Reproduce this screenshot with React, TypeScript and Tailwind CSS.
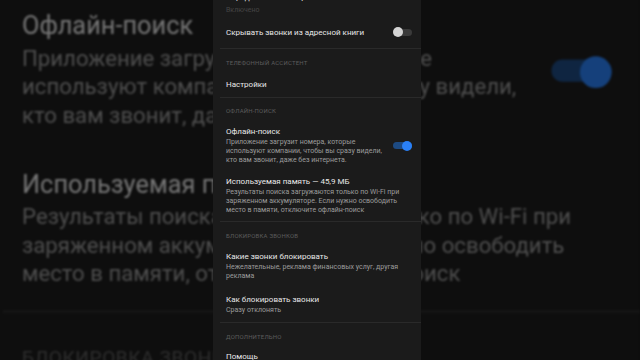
import React from "react";

function Title({ children }: { children: React.ReactNode }) {
  return <div className="text-[8px] leading-[11px] text-[#e8e8e8] whitespace-nowrap">{children}</div>;
}

function Desc({ children }: { children: React.ReactNode }) {
  return <div className="mt-[1px] text-[7px] leading-[9px] text-[#9b9b9b] whitespace-nowrap">{children}</div>;
}

function Label({ children }: { children: React.ReactNode }) {
  return <div className="text-[6px] leading-[8px] uppercase tracking-[0.2px] text-[#5c5c5c] whitespace-nowrap">{children}</div>;
}

function Toggle({ on }: { on: boolean }) {
  return (
    <div className="relative w-[19px] h-[10px] flex items-center shrink-0">
      <div className={on ? "w-full h-[7px] rounded-full bg-[#1d4a82]" : "w-full h-[7px] rounded-full bg-[#3a3a3a]"} />
      <div
        className={
          on
            ? "absolute top-0 right-0 w-[10px] h-[10px] rounded-full bg-[#2a80f6]"
            : "absolute top-0 left-0 w-[10px] h-[10px] rounded-full bg-[#d4d4d4]"
        }
      />
    </div>
  );
}

function Divider() {
  return <div className="ml-[7px] h-px bg-[#2a2a2a]" />;
}

function Screen() {
  return (
    <div className="w-[208px] h-[360px] bg-[#1b1b1b] overflow-hidden font-['Roboto',sans-serif]">
      <div className="h-[16px] overflow-hidden flex flex-col justify-end pl-[13px]">
        <div className="mb-[3px]">
          <Title>Определитель номера</Title>
        </div>
        <div className="mb-[2px] text-[7px] leading-[8px] text-[#454545]">Включено</div>
      </div>

      <div className="h-[32px] flex items-center justify-between pl-[13px] pr-[9px]">
        <Title>Скрывать звонки из адресной книги</Title>
        <Toggle on={false} />
      </div>

      <Divider />
      <div className="pl-[13px] pt-[10px] pb-[7px]">
        <Label>Телефонный ассистент</Label>
        <div className="mt-[12px]">
          <Title>Настройки</Title>
        </div>
      </div>

      <Divider />
      <div className="pl-[13px] pr-[9px] pt-[9px] pb-[6px]">
        <Label>Офлайн-поиск</Label>
        <div className="mt-[11px] flex items-center justify-between">
          <div>
            <Title>Офлайн-поиск</Title>
            <Desc>
              Приложение загрузит номера, которые
              <br />
              используют компании, чтобы вы сразу видели,
              <br />
              кто вам звонит, даже без интернета.
            </Desc>
          </div>
          <Toggle on={true} />
        </div>
        <div className="mt-[11px]">
          <Title>Используемая память — 45,9 МБ</Title>
          <Desc>
            Результаты поиска загружаются только по Wi-Fi при
            <br />
            заряженном аккумуляторе. Если нужно освободить
            <br />
            место в памяти, отключите офлайн-поиск
          </Desc>
        </div>
      </div>

      <Divider />
      <div className="pl-[13px] pt-[10px] pb-[7px]">
        <Label>Блокировка звонков</Label>
        <div className="mt-[11px]">
          <Title>Какие звонки блокировать</Title>
          <Desc>
            Нежелательные, реклама финансовых услуг, другая
            <br />
            реклама
          </Desc>
        </div>
        <div className="mt-[13px]">
          <Title>Как блокировать звонки</Title>
          <Desc>Сразу отклонять</Desc>
        </div>
      </div>

      <Divider />
      <div className="pl-[13px] pt-[10px]">
        <Label>Дополнительно</Label>
        <div className="mt-[10px]">
          <Title>Помощь</Title>
        </div>
      </div>
    </div>
  );
}

export default function App() {
  return (
    <div className="grid w-[640px] h-[360px] overflow-hidden bg-[#0c0c0c]">
      <div className="[grid-area:1/1] blur-[1px] brightness-50">
        <div className="ml-[213px] w-[208px] h-[360px] scale-[3.17] origin-[107px_180px]">
          <Screen />
        </div>
      </div>
      <div className="[grid-area:1/1] relative z-10 flex pl-[213px]">
        <Screen />
      </div>
    </div>
  );
}
